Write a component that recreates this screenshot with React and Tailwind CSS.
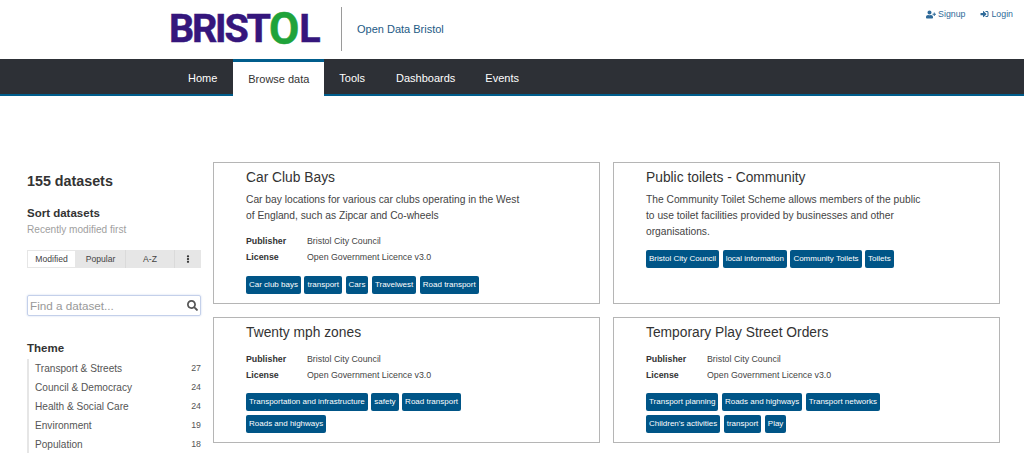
import React from "react";
import { FaUserPlus, FaSignInAlt, FaSearch, FaEllipsisV } from "react-icons/fa";

const Tag = ({ children }) => (
  <span className="inline-flex h-[18px] items-center rounded-[2px] bg-[#005587] px-[3px] text-[8px] leading-none text-white">{children}</span>
);

const Meta = () => (
  <div className="mt-[11px] flex flex-col gap-[4px] text-[8.8px] leading-[12px] text-[#444]">
    <div className="flex"><span className="w-[61px] font-bold text-[#333]">Publisher</span><span>Bristol City Council</span></div>
    <div className="flex"><span className="w-[61px] font-bold text-[#333]">License</span><span>Open Government Licence v3.0</span></div>
  </div>
);

const Card = ({ title, desc, meta, tags, h }) => (
  <div className={`${h} border border-[#b5b5b5] pl-[32px] pt-[6px]`}>
    <h3 className="text-[13.8px] leading-[18px] text-[#333]">{title}</h3>
    {desc && <p className="mt-[5px] w-[280px] text-[10.25px] leading-[16px] text-[#444]">{desc}</p>}
    {meta && <Meta />}
    <div className={`${meta ? (desc ? "mt-[13px]" : "mt-[12px]") : "mt-[10px]"} flex w-[290px] flex-wrap gap-x-[3.5px] gap-y-[4px]`}>
      {tags.map((t) => <Tag key={t}>{t}</Tag>)}
    </div>
  </div>
);

const themes = [["Transport & Streets", 27], ["Council & Democracy", 24], ["Health & Social Care", 24], ["Environment", 19], ["Population", 18]];

export default function App() {
  return (
    <div className="h-[453px] overflow-hidden bg-white font-['Liberation_Sans',Arial,sans-serif]">
      <header className="flex h-[59px] items-start pl-[169px]">
        <div className="mt-[7px] flex h-[44px] w-[150px] items-center font-['Roboto',sans-serif] text-[39.5px] font-bold leading-none tracking-[-2.2px] text-[#35167c] [-webkit-text-stroke:0.5px_#35167c]">
          BRIST<span className="text-[44px] tracking-[0px] text-[#1fa33a] [-webkit-text-stroke:0.5px_#1fa33a]">O</span>L
        </div>
        <div className="ml-[22px] mt-[7px] h-[44px] w-px bg-[#9a9a9a]" />
        <div className="ml-[15px] mt-[22px] text-[11px] leading-[14px] text-[#1d5a85]">Open Data Bristol</div>
        <div className="ml-auto mr-[11px] mt-[8px] flex items-center gap-[15px] text-[8.8px] leading-[12px] text-[#2f6a99]">
          <span className="flex items-center gap-[2px]"><FaUserPlus className="h-[9px] w-[10px]" />Signup</span>
          <span className="flex items-center gap-[2px]"><FaSignInAlt className="h-[8px] w-[9px]" />Login</span>
        </div>
      </header>
      <nav className="flex h-[37px] items-stretch border-b-[2px] border-[#005d8c] bg-[#2d3036] pl-[172px] text-[11px] text-white">
        <div className="flex items-center px-[16px] pt-[3px]">Home</div>
        <div className="-mb-[2px] flex w-[91px] items-center justify-center border-t-[3px] border-[#005d8c] bg-white text-[#333]">Browse data</div>
        <div className="flex items-center px-[15px] pt-[3px]">Tools</div>
        <div className="flex items-center pl-[16px] pr-[15px] pt-[3px]">Dashboards</div>
        <div className="flex items-center px-[15px] pt-[3px]">Events</div>
      </nav>
      <main className="flex pl-[27px] pt-[66px]">
        <aside className="w-[174px] shrink-0">
          <div className="mt-[10px] text-[14.3px] font-bold leading-[18px] text-[#333]">155 datasets</div>
          <div className="mt-[16px] text-[11.5px] font-bold leading-[14px] text-[#333]">Sort datasets</div>
          <div className="mt-[4px] text-[10.1px] leading-[12px] text-[#a0a0a0]">Recently modified first</div>
          <div className="mt-[14px] flex h-[18px] bg-[#e6e6e6] text-[8.6px] text-[#444]">
            <div className="flex w-[49px] items-center justify-center border border-[#e6e6e6] bg-white">Modified</div>
            <div className="flex w-[50px] items-center justify-center border-r border-[#dadada]">Popular</div>
            <div className="flex w-[49px] items-center justify-center border-r border-[#dadada]">A-Z</div>
            <div className="flex flex-1 items-center justify-center"><FaEllipsisV className="h-[8px] w-[6px] text-[#333]" /></div>
          </div>
          <div className="mt-[27px] flex h-[21px] items-center justify-between rounded-[2px] border border-[#c4d0ea] pl-[2px] pr-[2px] shadow-[0_0_2px_#c4d0ea]">
            <span className="text-[11.7px] text-[#999]">Find a dataset...</span>
            <FaSearch className="h-[11px] w-[11px] text-[#555]" />
          </div>
          <div className="mt-[24px] text-[11.5px] font-bold leading-[16px] text-[#333]">Theme</div>
          <ul className="mt-[3px] border-l-[2px] border-[#e6e6e6] pl-[6px] text-[10.1px] leading-[19px] text-[#555]">
            {themes.map(([n, c]) => (
              <li key={n} className="flex justify-between"><span>{n}</span><span className="text-[8.8px] text-[#555]">{c}</span></li>
            ))}
          </ul>
        </aside>
        <div className="ml-[12px] grid w-[787px] grid-cols-2 content-start gap-x-[13px] gap-y-[13px] self-start">
          <Card h="h-[142px]" title="Car Club Bays" desc="Car bay locations for various car clubs operating in the West of England, such as Zipcar and Co-wheels" meta tags={["Car club bays", "transport", "Cars", "Travelwest", "Road transport"]} />
          <Card h="h-[142px]" title="Public toilets - Community" desc="The Community Toilet Scheme allows members of the public to use toilet facilities provided by businesses and other organisations." tags={["Bristol City Council", "local information", "Community Toilets", "Toilets"]} />
          <Card h="h-[126px]" title="Twenty mph zones" meta tags={["Transportation and infrastructure", "safety", "Road transport", "Roads and highways"]} />
          <Card h="h-[126px]" title="Temporary Play Street Orders" meta tags={["Transport planning", "Roads and highways", "Transport networks", "Children's activities", "transport", "Play"]} />
        </div>
      </main>
    </div>
  );
}
